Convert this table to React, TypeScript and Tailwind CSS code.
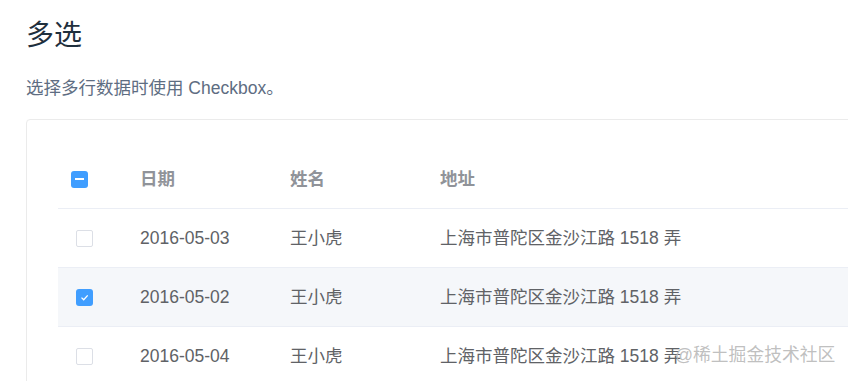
const font = "font-['Liberation_Sans','Noto_Sans_CJK_SC',sans-serif]"

type Row = { date: string; name: string; address: string; checked: boolean }

const rows: Row[] = [
  { date: "2016-05-03", name: "王小虎", address: "上海市普陀区金沙江路 1518 弄", checked: false },
  { date: "2016-05-02", name: "王小虎", address: "上海市普陀区金沙江路 1518 弄", checked: true },
  { date: "2016-05-04", name: "王小虎", address: "上海市普陀区金沙江路 1518 弄", checked: false },
]

function Checkbox({ state }: { state: "none" | "checked" | "indeterminate" }) {
  if (state === "none") {
    return <span className="block h-[17px] w-[17px] rounded-[2px] border border-[#dcdfe6] bg-white" />
  }
  return (
    <span className="flex h-[17px] w-[17px] items-center justify-center rounded-[3px] bg-[#409eff]">
      {state === "checked" ? (
        <svg width="11" height="11" viewBox="0 0 11 11" fill="none">
          <path d="M2.5 5.6 L4.7 7.8 L8.7 3.4" stroke="white" strokeWidth="1.3" />
        </svg>
      ) : (
        <span className="block h-[2px] w-[9px] bg-white" />
      )}
    </span>
  )
}

export default function App() {
  return (
    <div className={`relative h-[381px] w-[848px] overflow-hidden bg-white pl-[26px] ${font}`}>
      {/* Title */}
      <h2 className="pt-[18px] text-[28px] leading-[36px] text-[#1f2f3d]">多选</h2>

      {/* Description */}
      <p className="mt-[22px] text-[17.5px] leading-[24px] text-[#5e6d82]">选择多行数据时使用 Checkbox。</p>

      {/* Card */}
      <div className="mt-[19px] w-[880px] rounded-[4px] border border-[#ebebeb] px-[31px] pt-[30px]">
        {/* Header */}
        <div className="flex h-[59px] items-center border-b border-[#ebeef5] text-[17.5px] font-bold text-[#909399]">
          <div className="w-[70px] pl-[13px]">
            <Checkbox state="indeterminate" />
          </div>
          <div className="w-[150px] pl-[12px]">日期</div>
          <div className="w-[150px] pl-[12px]">姓名</div>
          <div className="pl-[12px]">地址</div>
        </div>

        {/* Body */}
        {rows.map((row) => (
          <div
            key={row.date}
            className={`flex h-[59px] items-center border-b border-[#ebeef5] text-[17.5px] text-[#606266] ${row.checked ? "bg-[#f5f7fa]" : ""}`}
          >
            <div className="w-[70px] pl-[18px]">
              <Checkbox state={row.checked ? "checked" : "none"} />
            </div>
            <div className="w-[150px] pl-[12px]">{row.date}</div>
            <div className="w-[150px] pl-[12px]">{row.name}</div>
            <div className="pl-[12px]">{row.address}</div>
          </div>
        ))}
      </div>

      {/* Watermark */}
      <span className="absolute left-[675px] top-[343px] text-[17.8px] leading-[24px] text-[#b8b8b8]/90">@稀土掘金技术社区</span>
    </div>
  )
}
